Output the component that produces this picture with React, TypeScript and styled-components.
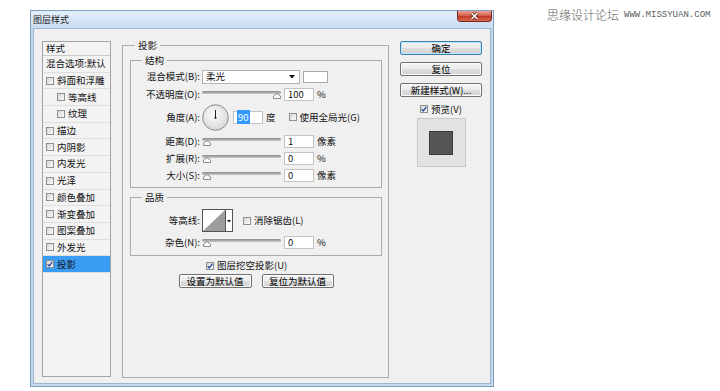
import React from 'react';
import styled, { createGlobalStyle } from 'styled-components';

const GlobalStyle = createGlobalStyle`
  html, body {
    margin: 0;
    padding: 0;
    background: #fff;
  }
  body {
    font-family: 'Noto Sans CJK SC', 'Liberation Sans', sans-serif;
    font-size: 9.5px;
    line-height: 13px;
    color: #111;
  }
`;

const Page = styled.div`
  display: flex;
  align-items: flex-start;
  padding: 10px 0 0 30px;
`;

const Window = styled.div`
  width: 464px;
  height: 377px;
  box-sizing: border-box;
  border: 1px solid #7f9dbf;
  background: #c3d7ed;
  padding: 0 2px 2px;
  display: flex;
  flex-direction: column;
`;

const TitleBar = styled.div`
  height: 17px;
  margin: 0 -2px;
  display: flex;
  align-items: flex-start;
  justify-content: space-between;
  background: linear-gradient(#e4eefa, #c9dcf1);
`;

const Title = styled.span`
  padding: 3px 0 0 2px;
  font-size: 9px;
  line-height: 12px;
  color: #1c1c1c;
`;

const CloseButton = styled.div`
  width: 35px;
  height: 11px;
  margin-right: 1px;
  box-sizing: border-box;
  border: 1px solid #7b2b22;
  border-top: none;
  border-radius: 0 0 4px 4px;
  background: linear-gradient(#e9a497 0%, #d5614d 45%, #c23b27 55%, #d86a52 100%);
  display: flex;
  align-items: center;
  justify-content: center;
`;

const Client = styled.div`
  flex: 1;
  box-sizing: border-box;
  background: #f0f0f0;
  border: 1px solid #9fb5cd;
  padding: 9px 8px 5px 8px;
  display: grid;
  grid-template-columns: 69px 267px 82px;
  column-gap: 11px;
`;

const StyleList = styled.div`
  margin: 3px 0 1px;
  border: 1px solid #a3a3a3;
  background: #f3f3f3;
  display: flex;
  flex-direction: column;
`;

const ListHeader = styled.div`
  height: 13px;
  line-height: 13px;
  padding-left: 3px;
  border-bottom: 1px solid #c9c9c9;
`;

const ListItem = styled.div<{ $indent?: boolean; $selected?: boolean }>`
  height: 15.7px;
  box-sizing: content-box;
  display: flex;
  align-items: center;
  gap: 3px;
  padding-left: ${p => (p.$indent ? 14 : 3)}px;
  border-bottom: 1px solid #dedede;
  background: ${p => (p.$selected ? '#3b9cf4' : 'transparent')};
  white-space: nowrap;
`;

const Box = styled.span`
  flex: none;
  width: 8px;
  height: 8px;
  box-sizing: border-box;
  border: 1px solid #8e8f8f;
  background: linear-gradient(135deg, #d6d6d6, #fbfbfb);
  display: flex;
  align-items: center;
  justify-content: center;
`;

const Group = styled.fieldset<{ $mt?: number; $pb?: number }>`
  margin: ${p => p.$mt ?? 0}px 0 0;
  padding: 0 0 ${p => p.$pb ?? 0}px;
  min-width: 0;
  border: 1px solid #ababab;
  display: flex;
  flex-direction: column;
`;

const OuterGroup = styled(Group)`
  padding: 0 6px 0 7px;
`;

const Legend = styled.legend<{ $ml: number }>`
  margin-left: ${p => p.$ml}px;
  padding: 0 3px;
  line-height: 14px;
`;

const Row = styled.div<{ $mt: number; $h: number }>`
  display: flex;
  align-items: center;
  margin-top: ${p => p.$mt}px;
  height: ${p => p.$h}px;
  white-space: nowrap;
`;

const Label = styled.span`
  flex: none;
  width: 69px;
  margin-right: 2px;
  text-align: right;
`;

const SelectBox = styled.div`
  width: 98px;
  height: 14px;
  box-sizing: border-box;
  border: 1px solid #b4b4b4;
  background: #fff;
  padding: 0 4px 0 3px;
  display: flex;
  align-items: center;
  justify-content: space-between;
`;

const Swatch = styled.div`
  width: 25px;
  height: 12px;
  margin-left: 3px;
  box-sizing: border-box;
  border: 1px solid #a9a9a9;
  background: #fff;
`;

const Slider = styled.div`
  position: relative;
  flex: none;
  width: 79px;
  height: 10px;
  display: flex;
  flex-direction: column;
`;

const Track = styled.div`
  margin-top: 2px;
  height: 3px;
  border-radius: 2px;
  background: linear-gradient(#8a8a8a, #c9c9c9);
`;

const Thumb = styled.svg<{ $end?: boolean }>`
  position: absolute;
  top: 4px;
  ${p => (p.$end ? 'right: 0;' : 'left: 1px;')}
`;

const NumField = styled.div<{ $ml?: number }>`
  flex: none;
  width: 30px;
  height: 13px;
  margin-left: ${p => p.$ml ?? 3}px;
  box-sizing: border-box;
  border: 1px solid #c3c3c3;
  background: #fff;
  padding-left: 3px;
  line-height: 11px;
`;

const Selected = styled.span`
  background: #3399ff;
  color: #fff;
  padding: 0 1px;
`;

const Unit = styled.span`
  margin-left: 3px;
`;

const Check = styled.span<{ $ml?: number }>`
  display: inline-flex;
  align-items: center;
  gap: 3px;
  margin-left: ${p => p.$ml ?? 0}px;
`;

const Contour = styled.svg`
  flex: none;
`;

const KnockRow = styled(Row)`
  padding-left: 76px;
`;

const ButtonRow = styled(Row)`
  justify-content: center;
  gap: 10px;
`;

const Button = styled.button<{ $w?: number; $default?: boolean }>`
  width: ${p => (p.$w ? `${p.$w}px` : '100%')};
  height: 14px;
  padding: 0;
  font: inherit;
  line-height: 12px;
  color: #000;
  border: 1px solid ${p => (p.$default ? '#3c7fb1' : '#707070')};
  border-radius: 2px;
  background: linear-gradient(#f4f4f4 0%, #ececec 48%, #dedede 52%, #d2d2d2 100%);
  box-shadow: ${p => (p.$default ? 'inset 0 0 0 1px #bfe3fa' : 'inset 0 0 0 1px #fcfcfc')};
`;

const SideColumn = styled.div`
  margin-top: 3px;
  display: flex;
  flex-direction: column;
  align-items: center;
  gap: 7px;
`;

const PreviewCheck = styled(Check)`
  margin-top: -1px;
  height: 12px;
`;

const Preview = styled.div`
  width: 49px;
  height: 49px;
  margin-top: -4px;
  box-sizing: border-box;
  border: 1px solid #c9c9c9;
  background: #e2e2e2;
  display: flex;
  align-items: center;
  justify-content: center;
`;

const PreviewSwatch = styled.div`
  width: 24px;
  height: 24px;
  box-sizing: border-box;
  border: 1px solid #3a3a3a;
  background: #555;
`;

const Watermark = styled.div`
  margin: -2px 0 0 53px;
  display: flex;
  align-items: center;
  gap: 5px;
  color: #5e5e5e;
  white-space: nowrap;
`;

const WatermarkName = styled.span`
  font-size: 12px;
  line-height: 14px;
  font-weight: 300;
`;

const WatermarkUrl = styled.span`
  font-family: 'Liberation Mono', monospace;
  font-size: 9px;
  line-height: 14px;
`;

const CheckMark = () => (
  <svg width="6" height="6" viewBox="0 0 6 6">
    <path d="M0.6 3.1 L2.3 4.9 L5.4 0.8" fill="none" stroke="#23489a" strokeWidth="1.3" />
  </svg>
);

const CheckBox = ({ checked }: { checked?: boolean }) => <Box>{checked && <CheckMark />}</Box>;

const SliderControl = ({ end }: { end?: boolean }) => (
  <Slider>
    <Track />
    <Thumb $end={end} width="8" height="6" viewBox="0 0 8 6">
      <path d="M0.5 5.5 V3 L4 0.5 L7.5 3 V5.5 Z" fill="#fafafa" stroke="#8a8a8a" />
    </Thumb>
  </Slider>
);

const layers: { name: string; check?: boolean; indent?: boolean; checked?: boolean }[] = [
  { name: '混合选项:默认' },
  { name: '斜面和浮雕', check: true },
  { name: '等高线', check: true, indent: true },
  { name: '纹理', check: true, indent: true },
  { name: '描边', check: true },
  { name: '内阴影', check: true },
  { name: '内发光', check: true },
  { name: '光泽', check: true },
  { name: '颜色叠加', check: true },
  { name: '渐变叠加', check: true },
  { name: '图案叠加', check: true },
  { name: '外发光', check: true },
  { name: '投影', check: true, checked: true },
];

const sliderRows = [
  { label: '距离(D):', value: '1', unit: '像素', mt: 4 },
  { label: '扩展(R):', value: '0', unit: '%', mt: 3 },
  { label: '大小(S):', value: '0', unit: '像素', mt: 3 },
];

const App = () => (
  <>
    <GlobalStyle />
    <Page>
      <Window>
        <TitleBar>
          <Title>图层样式</Title>
          <CloseButton>
            <svg width="11" height="8" viewBox="0 0 11 8">
              <path d="M2.5 1 L8.5 7 M8.5 1 L2.5 7" stroke="#5a1d16" strokeWidth="3" />
              <path d="M2.5 1 L8.5 7 M8.5 1 L2.5 7" stroke="#fff" strokeWidth="1.6" />
            </svg>
          </CloseButton>
        </TitleBar>
        <Client>
          <StyleList>
            <ListHeader>样式</ListHeader>
            {layers.map(l => (
              <ListItem key={l.name} $indent={l.indent} $selected={l.checked}>
                {l.check && <CheckBox checked={l.checked} />}
                {l.name}
              </ListItem>
            ))}
          </StyleList>

          <OuterGroup>
            <Legend $ml={5}>投影</Legend>
            <Group $mt={1} $pb={5}>
              <Legend $ml={11}>结构</Legend>
              <Row $mt={2} $h={15}>
                <Label>混合模式(B):</Label>
                <SelectBox>
                  柔光
                  <svg width="6" height="4" viewBox="0 0 6 4">
                    <path d="M0 0 H6 L3 3.5 Z" fill="#111" />
                  </svg>
                </SelectBox>
                <Swatch />
              </Row>
              <Row $mt={3} $h={14}>
                <Label>不透明度(O):</Label>
                <SliderControl end />
                <NumField>100</NumField>
                <Unit>%</Unit>
              </Row>
              <Row $mt={3} $h={26}>
                <Label>角度(A):</Label>
                <svg width="27" height="27" viewBox="0 0 27 27">
                  <defs>
                    <radialGradient id="dial" cx="45%" cy="40%" r="65%">
                      <stop offset="0" stopColor="#ffffff" />
                      <stop offset="1" stopColor="#d4d4d4" />
                    </radialGradient>
                  </defs>
                  <circle cx="13.5" cy="13.5" r="12.8" fill="url(#dial)" stroke="#8c8c8c" strokeWidth="1" />
                  <path d="M13.5 6 V13.5" stroke="#222" strokeWidth="1" />
                  <circle cx="13.5" cy="13.8" r="1.1" fill="#222" />
                </svg>
                <NumField $ml={4}>
                  <Selected>90</Selected>
                </NumField>
                <Unit>度</Unit>
                <Check $ml={13}>
                  <CheckBox />
                  使用全局光(G)
                </Check>
              </Row>
              {sliderRows.map(r => (
                <Row key={r.label} $mt={r.mt} $h={14}>
                  <Label>{r.label}</Label>
                  <SliderControl />
                  <NumField>{r.value}</NumField>
                  <Unit>{r.unit}</Unit>
                </Row>
              ))}
            </Group>

            <Group $mt={2} $pb={6}>
              <Legend $ml={11}>品质</Legend>
              <Row $mt={5} $h={23}>
                <Label>等高线:</Label>
                <Contour width="31" height="23" viewBox="0 0 31 23">
                  <rect x="0.5" y="0.5" width="30" height="22" fill="#fff" stroke="#555" />
                  <path d="M1 22 L23 1 V22 Z" fill="#9d9d9d" />
                  <path d="M23.5 0.5 V22.5" stroke="#555" />
                  <path d="M25 11 H29 L27 13.5 Z" fill="#111" />
                </Contour>
                <Check $ml={10}>
                  <CheckBox />
                  消除锯齿(L)
                </Check>
              </Row>
              <Row $mt={3} $h={14}>
                <Label>杂色(N):</Label>
                <SliderControl />
                <NumField>0</NumField>
                <Unit>%</Unit>
              </Row>
            </Group>

            <KnockRow $mt={3} $h={13}>
              <Check>
                <CheckBox checked />
                图层挖空投影(U)
              </Check>
            </KnockRow>
            <ButtonRow $mt={2} $h={14}>
              <Button $w={73}>设置为默认值</Button>
              <Button $w={72}>复位为默认值</Button>
            </ButtonRow>
          </OuterGroup>

          <SideColumn>
            <Button $default>确定</Button>
            <Button>复位</Button>
            <Button>新建样式(W)...</Button>
            <PreviewCheck>
              <CheckBox checked />
              预览(V)
            </PreviewCheck>
            <Preview>
              <PreviewSwatch />
            </Preview>
          </SideColumn>
        </Client>
      </Window>
      <Watermark>
        <WatermarkName>思缘设计论坛</WatermarkName>
        <WatermarkUrl>WWW.MISSYUAN.COM</WatermarkUrl>
      </Watermark>
    </Page>
  </>
);

export default App;
